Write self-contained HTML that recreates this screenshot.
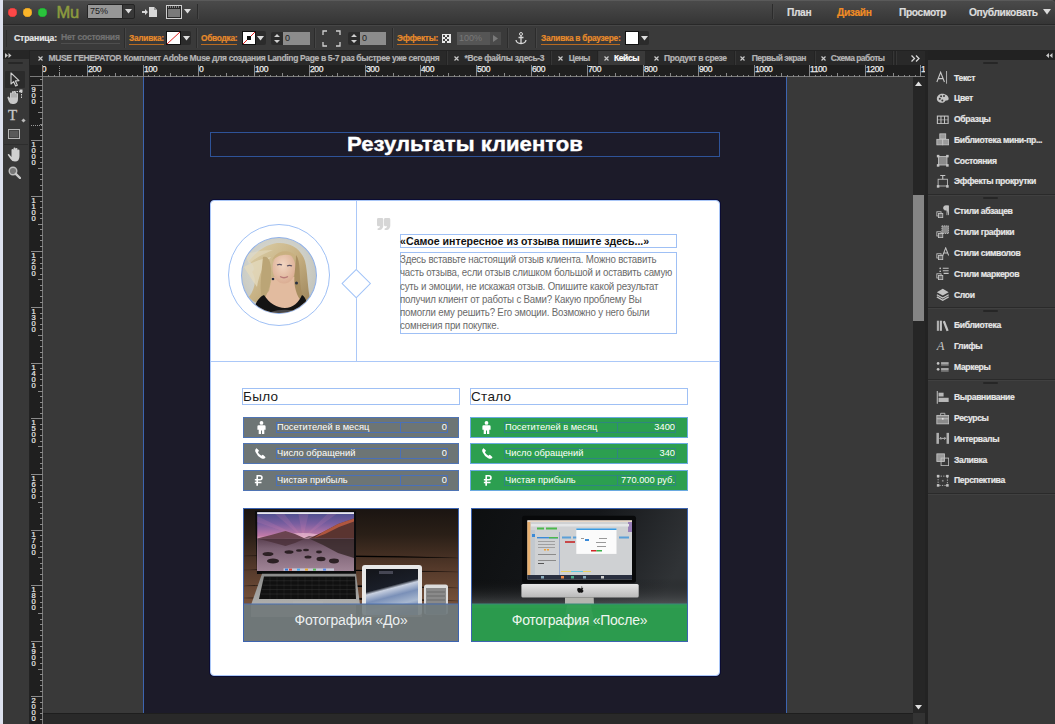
<!DOCTYPE html><html><head><meta charset="utf-8"><title>Muse</title><style>
*{margin:0;padding:0;box-sizing:border-box}
html,body{width:1055px;height:724px;overflow:hidden;background:#383838;font-family:"Liberation Sans",sans-serif}
.abs{position:absolute}
.os{font-family:"Liberation Sans",sans-serif}
.ui{font-family:"Liberation Sans",sans-serif;font-weight:bold;white-space:nowrap;-webkit-text-stroke:0.2px currentColor}
</style></head><body>
<div class="abs" style="left:0;top:0;width:3px;height:724px;background:#dde1ee"></div>
<div class="abs" style="left:3px;top:0;width:1052px;height:24px;background:linear-gradient(#4a4a4a,#353535);border-top-right-radius:4px;border-top:1px solid #5a5a5a"></div>
<div class="abs" style="left:3px;top:24px;width:1052px;height:1px;background:#282828"></div>
<div class="abs" style="left:3px;top:25px;width:1052px;height:25px;background:#3a3a3a;border-top:1px solid #464646"></div>
<div class="abs" style="left:30px;top:50px;width:895px;height:15px;background:#292929;border-top:1px solid #222"></div>
<div class="abs" style="left:3px;top:50px;width:26px;height:674px;background:#383838"></div>
<div class="abs" style="left:3px;top:50px;width:26px;height:9px;background:#262626"></div>
<div class="abs" style="left:29px;top:50px;width:1px;height:674px;background:#222"></div>
<div class="abs" style="left:43px;top:77px;width:870px;height:636px;background:#393939"></div>
<div class="abs" style="left:143px;top:77px;width:644px;height:636px;background:#1c1b29;border-left:1px solid #3d65b0;border-right:1px solid #3d65b0"></div>
<div class="abs" style="left:30px;top:65px;width:13px;height:12px;background:#1f1f1f;border-bottom:1px solid #7a7a7a"></div>
<div class="abs" style="left:42px;top:65px;width:1px;height:14px;background:#8a8a8a"></div>
<svg width="882" height="12" style="position:absolute;left:43px;top:65px"><rect width="882" height="12" fill="#1f1f1f"/><rect y="11" width="882" height="1" fill="#7a7a7a"/><rect x="5" y="10" width="1" height="2" fill="#8a8a8a"/><rect x="11" y="10" width="1" height="2" fill="#8a8a8a"/><rect x="16" y="8" width="1" height="4" fill="#8a8a8a"/><rect x="22" y="10" width="1" height="2" fill="#8a8a8a"/><rect x="27" y="10" width="1" height="2" fill="#8a8a8a"/><rect x="33" y="10" width="1" height="2" fill="#8a8a8a"/><rect x="39" y="10" width="1" height="2" fill="#8a8a8a"/><text x="-10" y="7.2" font-family="Liberation Sans" font-size="8.6" letter-spacing="-0.45" fill="#ececec" stroke="#ececec" stroke-width="0.25">300</text><rect x="44" y="0" width="1" height="12" fill="#8a8a8a"/><rect x="50" y="10" width="1" height="2" fill="#8a8a8a"/><rect x="55" y="10" width="1" height="2" fill="#8a8a8a"/><rect x="61" y="10" width="1" height="2" fill="#8a8a8a"/><rect x="66" y="10" width="1" height="2" fill="#8a8a8a"/><rect x="72" y="8" width="1" height="4" fill="#8a8a8a"/><rect x="77" y="10" width="1" height="2" fill="#8a8a8a"/><rect x="83" y="10" width="1" height="2" fill="#8a8a8a"/><rect x="89" y="10" width="1" height="2" fill="#8a8a8a"/><rect x="94" y="10" width="1" height="2" fill="#8a8a8a"/><text x="45" y="7.2" font-family="Liberation Sans" font-size="8.6" letter-spacing="-0.45" fill="#ececec" stroke="#ececec" stroke-width="0.25">200</text><rect x="100" y="0" width="1" height="12" fill="#8a8a8a"/><rect x="105" y="10" width="1" height="2" fill="#8a8a8a"/><rect x="111" y="10" width="1" height="2" fill="#8a8a8a"/><rect x="116" y="10" width="1" height="2" fill="#8a8a8a"/><rect x="122" y="10" width="1" height="2" fill="#8a8a8a"/><rect x="127" y="8" width="1" height="4" fill="#8a8a8a"/><rect x="133" y="10" width="1" height="2" fill="#8a8a8a"/><rect x="139" y="10" width="1" height="2" fill="#8a8a8a"/><rect x="144" y="10" width="1" height="2" fill="#8a8a8a"/><rect x="150" y="10" width="1" height="2" fill="#8a8a8a"/><text x="101" y="7.2" font-family="Liberation Sans" font-size="8.6" letter-spacing="-0.45" fill="#ececec" stroke="#ececec" stroke-width="0.25">100</text><rect x="155" y="0" width="1" height="12" fill="#8a8a8a"/><rect x="161" y="10" width="1" height="2" fill="#8a8a8a"/><rect x="166" y="10" width="1" height="2" fill="#8a8a8a"/><rect x="172" y="10" width="1" height="2" fill="#8a8a8a"/><rect x="177" y="10" width="1" height="2" fill="#8a8a8a"/><rect x="183" y="8" width="1" height="4" fill="#8a8a8a"/><rect x="189" y="10" width="1" height="2" fill="#8a8a8a"/><rect x="194" y="10" width="1" height="2" fill="#8a8a8a"/><rect x="200" y="10" width="1" height="2" fill="#8a8a8a"/><rect x="205" y="10" width="1" height="2" fill="#8a8a8a"/><text x="156" y="7.2" font-family="Liberation Sans" font-size="8.6" letter-spacing="-0.45" fill="#ececec" stroke="#ececec" stroke-width="0.25">0</text><rect x="211" y="0" width="1" height="12" fill="#8a8a8a"/><rect x="216" y="10" width="1" height="2" fill="#8a8a8a"/><rect x="222" y="10" width="1" height="2" fill="#8a8a8a"/><rect x="227" y="10" width="1" height="2" fill="#8a8a8a"/><rect x="233" y="10" width="1" height="2" fill="#8a8a8a"/><rect x="239" y="8" width="1" height="4" fill="#8a8a8a"/><rect x="244" y="10" width="1" height="2" fill="#8a8a8a"/><rect x="250" y="10" width="1" height="2" fill="#8a8a8a"/><rect x="255" y="10" width="1" height="2" fill="#8a8a8a"/><rect x="261" y="10" width="1" height="2" fill="#8a8a8a"/><text x="212" y="7.2" font-family="Liberation Sans" font-size="8.6" letter-spacing="-0.45" fill="#ececec" stroke="#ececec" stroke-width="0.25">100</text><rect x="266" y="0" width="1" height="12" fill="#8a8a8a"/><rect x="272" y="10" width="1" height="2" fill="#8a8a8a"/><rect x="277" y="10" width="1" height="2" fill="#8a8a8a"/><rect x="283" y="10" width="1" height="2" fill="#8a8a8a"/><rect x="289" y="10" width="1" height="2" fill="#8a8a8a"/><rect x="294" y="8" width="1" height="4" fill="#8a8a8a"/><rect x="300" y="10" width="1" height="2" fill="#8a8a8a"/><rect x="305" y="10" width="1" height="2" fill="#8a8a8a"/><rect x="311" y="10" width="1" height="2" fill="#8a8a8a"/><rect x="316" y="10" width="1" height="2" fill="#8a8a8a"/><text x="267" y="7.2" font-family="Liberation Sans" font-size="8.6" letter-spacing="-0.45" fill="#ececec" stroke="#ececec" stroke-width="0.25">200</text><rect x="322" y="0" width="1" height="12" fill="#8a8a8a"/><rect x="327" y="10" width="1" height="2" fill="#8a8a8a"/><rect x="333" y="10" width="1" height="2" fill="#8a8a8a"/><rect x="339" y="10" width="1" height="2" fill="#8a8a8a"/><rect x="344" y="10" width="1" height="2" fill="#8a8a8a"/><rect x="350" y="8" width="1" height="4" fill="#8a8a8a"/><rect x="355" y="10" width="1" height="2" fill="#8a8a8a"/><rect x="361" y="10" width="1" height="2" fill="#8a8a8a"/><rect x="366" y="10" width="1" height="2" fill="#8a8a8a"/><rect x="372" y="10" width="1" height="2" fill="#8a8a8a"/><text x="323" y="7.2" font-family="Liberation Sans" font-size="8.6" letter-spacing="-0.45" fill="#ececec" stroke="#ececec" stroke-width="0.25">300</text><rect x="377" y="0" width="1" height="12" fill="#8a8a8a"/><rect x="383" y="10" width="1" height="2" fill="#8a8a8a"/><rect x="389" y="10" width="1" height="2" fill="#8a8a8a"/><rect x="394" y="10" width="1" height="2" fill="#8a8a8a"/><rect x="400" y="10" width="1" height="2" fill="#8a8a8a"/><rect x="405" y="8" width="1" height="4" fill="#8a8a8a"/><rect x="411" y="10" width="1" height="2" fill="#8a8a8a"/><rect x="416" y="10" width="1" height="2" fill="#8a8a8a"/><rect x="422" y="10" width="1" height="2" fill="#8a8a8a"/><rect x="427" y="10" width="1" height="2" fill="#8a8a8a"/><text x="378" y="7.2" font-family="Liberation Sans" font-size="8.6" letter-spacing="-0.45" fill="#ececec" stroke="#ececec" stroke-width="0.25">400</text><rect x="433" y="0" width="1" height="12" fill="#8a8a8a"/><rect x="439" y="10" width="1" height="2" fill="#8a8a8a"/><rect x="444" y="10" width="1" height="2" fill="#8a8a8a"/><rect x="450" y="10" width="1" height="2" fill="#8a8a8a"/><rect x="455" y="10" width="1" height="2" fill="#8a8a8a"/><rect x="461" y="8" width="1" height="4" fill="#8a8a8a"/><rect x="466" y="10" width="1" height="2" fill="#8a8a8a"/><rect x="472" y="10" width="1" height="2" fill="#8a8a8a"/><rect x="477" y="10" width="1" height="2" fill="#8a8a8a"/><rect x="483" y="10" width="1" height="2" fill="#8a8a8a"/><text x="434" y="7.2" font-family="Liberation Sans" font-size="8.6" letter-spacing="-0.45" fill="#ececec" stroke="#ececec" stroke-width="0.25">500</text><rect x="488" y="0" width="1" height="12" fill="#8a8a8a"/><rect x="494" y="10" width="1" height="2" fill="#8a8a8a"/><rect x="500" y="10" width="1" height="2" fill="#8a8a8a"/><rect x="505" y="10" width="1" height="2" fill="#8a8a8a"/><rect x="511" y="10" width="1" height="2" fill="#8a8a8a"/><rect x="516" y="8" width="1" height="4" fill="#8a8a8a"/><rect x="522" y="10" width="1" height="2" fill="#8a8a8a"/><rect x="527" y="10" width="1" height="2" fill="#8a8a8a"/><rect x="533" y="10" width="1" height="2" fill="#8a8a8a"/><rect x="538" y="10" width="1" height="2" fill="#8a8a8a"/><text x="489" y="7.2" font-family="Liberation Sans" font-size="8.6" letter-spacing="-0.45" fill="#ececec" stroke="#ececec" stroke-width="0.25">600</text><rect x="544" y="0" width="1" height="12" fill="#8a8a8a"/><rect x="550" y="10" width="1" height="2" fill="#8a8a8a"/><rect x="555" y="10" width="1" height="2" fill="#8a8a8a"/><rect x="561" y="10" width="1" height="2" fill="#8a8a8a"/><rect x="566" y="10" width="1" height="2" fill="#8a8a8a"/><rect x="572" y="8" width="1" height="4" fill="#8a8a8a"/><rect x="577" y="10" width="1" height="2" fill="#8a8a8a"/><rect x="583" y="10" width="1" height="2" fill="#8a8a8a"/><rect x="588" y="10" width="1" height="2" fill="#8a8a8a"/><rect x="594" y="10" width="1" height="2" fill="#8a8a8a"/><text x="545" y="7.2" font-family="Liberation Sans" font-size="8.6" letter-spacing="-0.45" fill="#ececec" stroke="#ececec" stroke-width="0.25">700</text><rect x="600" y="0" width="1" height="12" fill="#8a8a8a"/><rect x="605" y="10" width="1" height="2" fill="#8a8a8a"/><rect x="611" y="10" width="1" height="2" fill="#8a8a8a"/><rect x="616" y="10" width="1" height="2" fill="#8a8a8a"/><rect x="622" y="10" width="1" height="2" fill="#8a8a8a"/><rect x="627" y="8" width="1" height="4" fill="#8a8a8a"/><rect x="633" y="10" width="1" height="2" fill="#8a8a8a"/><rect x="638" y="10" width="1" height="2" fill="#8a8a8a"/><rect x="644" y="10" width="1" height="2" fill="#8a8a8a"/><rect x="650" y="10" width="1" height="2" fill="#8a8a8a"/><text x="601" y="7.2" font-family="Liberation Sans" font-size="8.6" letter-spacing="-0.45" fill="#ececec" stroke="#ececec" stroke-width="0.25">800</text><rect x="655" y="0" width="1" height="12" fill="#8a8a8a"/><rect x="661" y="10" width="1" height="2" fill="#8a8a8a"/><rect x="666" y="10" width="1" height="2" fill="#8a8a8a"/><rect x="672" y="10" width="1" height="2" fill="#8a8a8a"/><rect x="677" y="10" width="1" height="2" fill="#8a8a8a"/><rect x="683" y="8" width="1" height="4" fill="#8a8a8a"/><rect x="688" y="10" width="1" height="2" fill="#8a8a8a"/><rect x="694" y="10" width="1" height="2" fill="#8a8a8a"/><rect x="700" y="10" width="1" height="2" fill="#8a8a8a"/><rect x="705" y="10" width="1" height="2" fill="#8a8a8a"/><text x="656" y="7.2" font-family="Liberation Sans" font-size="8.6" letter-spacing="-0.45" fill="#ececec" stroke="#ececec" stroke-width="0.25">900</text><rect x="711" y="0" width="1" height="12" fill="#8a8a8a"/><rect x="716" y="10" width="1" height="2" fill="#8a8a8a"/><rect x="722" y="10" width="1" height="2" fill="#8a8a8a"/><rect x="727" y="10" width="1" height="2" fill="#8a8a8a"/><rect x="733" y="10" width="1" height="2" fill="#8a8a8a"/><rect x="738" y="8" width="1" height="4" fill="#8a8a8a"/><rect x="744" y="10" width="1" height="2" fill="#8a8a8a"/><rect x="750" y="10" width="1" height="2" fill="#8a8a8a"/><rect x="755" y="10" width="1" height="2" fill="#8a8a8a"/><rect x="761" y="10" width="1" height="2" fill="#8a8a8a"/><text x="712" y="7.2" font-family="Liberation Sans" font-size="8.6" letter-spacing="-0.45" fill="#ececec" stroke="#ececec" stroke-width="0.25">1000</text><rect x="766" y="0" width="1" height="12" fill="#8a8a8a"/><rect x="772" y="10" width="1" height="2" fill="#8a8a8a"/><rect x="777" y="10" width="1" height="2" fill="#8a8a8a"/><rect x="783" y="10" width="1" height="2" fill="#8a8a8a"/><rect x="788" y="10" width="1" height="2" fill="#8a8a8a"/><rect x="794" y="8" width="1" height="4" fill="#8a8a8a"/><rect x="800" y="10" width="1" height="2" fill="#8a8a8a"/><rect x="805" y="10" width="1" height="2" fill="#8a8a8a"/><rect x="811" y="10" width="1" height="2" fill="#8a8a8a"/><rect x="816" y="10" width="1" height="2" fill="#8a8a8a"/><text x="767" y="7.2" font-family="Liberation Sans" font-size="8.6" letter-spacing="-0.45" fill="#ececec" stroke="#ececec" stroke-width="0.25">1100</text><rect x="822" y="0" width="1" height="12" fill="#8a8a8a"/><rect x="827" y="10" width="1" height="2" fill="#8a8a8a"/><rect x="833" y="10" width="1" height="2" fill="#8a8a8a"/><rect x="838" y="10" width="1" height="2" fill="#8a8a8a"/><rect x="844" y="10" width="1" height="2" fill="#8a8a8a"/><rect x="850" y="8" width="1" height="4" fill="#8a8a8a"/><rect x="855" y="10" width="1" height="2" fill="#8a8a8a"/><rect x="861" y="10" width="1" height="2" fill="#8a8a8a"/><rect x="866" y="10" width="1" height="2" fill="#8a8a8a"/><rect x="872" y="10" width="1" height="2" fill="#8a8a8a"/><text x="823" y="7.2" font-family="Liberation Sans" font-size="8.6" letter-spacing="-0.45" fill="#ececec" stroke="#ececec" stroke-width="0.25">1200</text><rect x="877" y="0" width="1" height="12" fill="#8a8a8a"/><text x="878" y="7.2" font-family="Liberation Sans" font-size="8.6" letter-spacing="-0.45" fill="#ececec" stroke="#ececec" stroke-width="0.25">1300</text></svg>
<svg width="13" height="647" style="position:absolute;left:30px;top:77px"><rect width="13" height="647" fill="#1f1f1f"/><rect x="12" width="1" height="647" fill="#7a7a7a"/><rect x="10" y="2" width="3" height="1" fill="#8a8a8a"/><text x="3.6" y="-41.1" text-anchor="middle" font-family="Liberation Sans" font-size="7.6" fill="#ececec" stroke="#ececec" stroke-width="0.2">8</text><text x="3.6" y="-35.2" text-anchor="middle" font-family="Liberation Sans" font-size="7.6" fill="#ececec" stroke="#ececec" stroke-width="0.2">0</text><text x="3.6" y="-29.3" text-anchor="middle" font-family="Liberation Sans" font-size="7.6" fill="#ececec" stroke="#ececec" stroke-width="0.2">0</text><rect x="1" y="8" width="12" height="1" fill="#8a8a8a"/><rect x="10" y="13" width="3" height="1" fill="#8a8a8a"/><rect x="10" y="19" width="3" height="1" fill="#8a8a8a"/><rect x="10" y="24" width="3" height="1" fill="#8a8a8a"/><rect x="10" y="30" width="3" height="1" fill="#8a8a8a"/><rect x="8" y="35" width="5" height="1" fill="#8a8a8a"/><rect x="10" y="41" width="3" height="1" fill="#8a8a8a"/><rect x="10" y="47" width="3" height="1" fill="#8a8a8a"/><rect x="10" y="52" width="3" height="1" fill="#8a8a8a"/><rect x="10" y="58" width="3" height="1" fill="#8a8a8a"/><text x="3.6" y="14.9" text-anchor="middle" font-family="Liberation Sans" font-size="7.6" fill="#ececec" stroke="#ececec" stroke-width="0.2">9</text><text x="3.6" y="20.8" text-anchor="middle" font-family="Liberation Sans" font-size="7.6" fill="#ececec" stroke="#ececec" stroke-width="0.2">0</text><text x="3.6" y="26.7" text-anchor="middle" font-family="Liberation Sans" font-size="7.6" fill="#ececec" stroke="#ececec" stroke-width="0.2">0</text><rect x="1" y="63" width="12" height="1" fill="#8a8a8a"/><rect x="10" y="69" width="3" height="1" fill="#8a8a8a"/><rect x="10" y="74" width="3" height="1" fill="#8a8a8a"/><rect x="10" y="80" width="3" height="1" fill="#8a8a8a"/><rect x="10" y="85" width="3" height="1" fill="#8a8a8a"/><rect x="8" y="91" width="5" height="1" fill="#8a8a8a"/><rect x="10" y="97" width="3" height="1" fill="#8a8a8a"/><rect x="10" y="102" width="3" height="1" fill="#8a8a8a"/><rect x="10" y="108" width="3" height="1" fill="#8a8a8a"/><rect x="10" y="113" width="3" height="1" fill="#8a8a8a"/><text x="3.6" y="69.9" text-anchor="middle" font-family="Liberation Sans" font-size="7.6" fill="#ececec" stroke="#ececec" stroke-width="0.2">1</text><text x="3.6" y="75.8" text-anchor="middle" font-family="Liberation Sans" font-size="7.6" fill="#ececec" stroke="#ececec" stroke-width="0.2">0</text><text x="3.6" y="81.7" text-anchor="middle" font-family="Liberation Sans" font-size="7.6" fill="#ececec" stroke="#ececec" stroke-width="0.2">0</text><text x="3.6" y="87.6" text-anchor="middle" font-family="Liberation Sans" font-size="7.6" fill="#ececec" stroke="#ececec" stroke-width="0.2">0</text><rect x="1" y="119" width="12" height="1" fill="#8a8a8a"/><rect x="10" y="124" width="3" height="1" fill="#8a8a8a"/><rect x="10" y="130" width="3" height="1" fill="#8a8a8a"/><rect x="10" y="136" width="3" height="1" fill="#8a8a8a"/><rect x="10" y="141" width="3" height="1" fill="#8a8a8a"/><rect x="8" y="147" width="5" height="1" fill="#8a8a8a"/><rect x="10" y="152" width="3" height="1" fill="#8a8a8a"/><rect x="10" y="158" width="3" height="1" fill="#8a8a8a"/><rect x="10" y="163" width="3" height="1" fill="#8a8a8a"/><rect x="10" y="169" width="3" height="1" fill="#8a8a8a"/><text x="3.6" y="125.9" text-anchor="middle" font-family="Liberation Sans" font-size="7.6" fill="#ececec" stroke="#ececec" stroke-width="0.2">1</text><text x="3.6" y="131.8" text-anchor="middle" font-family="Liberation Sans" font-size="7.6" fill="#ececec" stroke="#ececec" stroke-width="0.2">1</text><text x="3.6" y="137.7" text-anchor="middle" font-family="Liberation Sans" font-size="7.6" fill="#ececec" stroke="#ececec" stroke-width="0.2">0</text><text x="3.6" y="143.6" text-anchor="middle" font-family="Liberation Sans" font-size="7.6" fill="#ececec" stroke="#ececec" stroke-width="0.2">0</text><rect x="1" y="174" width="12" height="1" fill="#8a8a8a"/><rect x="10" y="180" width="3" height="1" fill="#8a8a8a"/><rect x="10" y="186" width="3" height="1" fill="#8a8a8a"/><rect x="10" y="191" width="3" height="1" fill="#8a8a8a"/><rect x="10" y="197" width="3" height="1" fill="#8a8a8a"/><rect x="8" y="202" width="5" height="1" fill="#8a8a8a"/><rect x="10" y="208" width="3" height="1" fill="#8a8a8a"/><rect x="10" y="213" width="3" height="1" fill="#8a8a8a"/><rect x="10" y="219" width="3" height="1" fill="#8a8a8a"/><rect x="10" y="225" width="3" height="1" fill="#8a8a8a"/><text x="3.6" y="180.9" text-anchor="middle" font-family="Liberation Sans" font-size="7.6" fill="#ececec" stroke="#ececec" stroke-width="0.2">1</text><text x="3.6" y="186.8" text-anchor="middle" font-family="Liberation Sans" font-size="7.6" fill="#ececec" stroke="#ececec" stroke-width="0.2">2</text><text x="3.6" y="192.7" text-anchor="middle" font-family="Liberation Sans" font-size="7.6" fill="#ececec" stroke="#ececec" stroke-width="0.2">0</text><text x="3.6" y="198.6" text-anchor="middle" font-family="Liberation Sans" font-size="7.6" fill="#ececec" stroke="#ececec" stroke-width="0.2">0</text><rect x="1" y="230" width="12" height="1" fill="#8a8a8a"/><rect x="10" y="236" width="3" height="1" fill="#8a8a8a"/><rect x="10" y="241" width="3" height="1" fill="#8a8a8a"/><rect x="10" y="247" width="3" height="1" fill="#8a8a8a"/><rect x="10" y="252" width="3" height="1" fill="#8a8a8a"/><rect x="8" y="258" width="5" height="1" fill="#8a8a8a"/><rect x="10" y="263" width="3" height="1" fill="#8a8a8a"/><rect x="10" y="269" width="3" height="1" fill="#8a8a8a"/><rect x="10" y="275" width="3" height="1" fill="#8a8a8a"/><rect x="10" y="280" width="3" height="1" fill="#8a8a8a"/><text x="3.6" y="236.9" text-anchor="middle" font-family="Liberation Sans" font-size="7.6" fill="#ececec" stroke="#ececec" stroke-width="0.2">1</text><text x="3.6" y="242.8" text-anchor="middle" font-family="Liberation Sans" font-size="7.6" fill="#ececec" stroke="#ececec" stroke-width="0.2">3</text><text x="3.6" y="248.7" text-anchor="middle" font-family="Liberation Sans" font-size="7.6" fill="#ececec" stroke="#ececec" stroke-width="0.2">0</text><text x="3.6" y="254.6" text-anchor="middle" font-family="Liberation Sans" font-size="7.6" fill="#ececec" stroke="#ececec" stroke-width="0.2">0</text><rect x="1" y="286" width="12" height="1" fill="#8a8a8a"/><rect x="10" y="291" width="3" height="1" fill="#8a8a8a"/><rect x="10" y="297" width="3" height="1" fill="#8a8a8a"/><rect x="10" y="302" width="3" height="1" fill="#8a8a8a"/><rect x="10" y="308" width="3" height="1" fill="#8a8a8a"/><rect x="8" y="314" width="5" height="1" fill="#8a8a8a"/><rect x="10" y="319" width="3" height="1" fill="#8a8a8a"/><rect x="10" y="325" width="3" height="1" fill="#8a8a8a"/><rect x="10" y="330" width="3" height="1" fill="#8a8a8a"/><rect x="10" y="336" width="3" height="1" fill="#8a8a8a"/><text x="3.6" y="292.9" text-anchor="middle" font-family="Liberation Sans" font-size="7.6" fill="#ececec" stroke="#ececec" stroke-width="0.2">1</text><text x="3.6" y="298.8" text-anchor="middle" font-family="Liberation Sans" font-size="7.6" fill="#ececec" stroke="#ececec" stroke-width="0.2">4</text><text x="3.6" y="304.7" text-anchor="middle" font-family="Liberation Sans" font-size="7.6" fill="#ececec" stroke="#ececec" stroke-width="0.2">0</text><text x="3.6" y="310.6" text-anchor="middle" font-family="Liberation Sans" font-size="7.6" fill="#ececec" stroke="#ececec" stroke-width="0.2">0</text><rect x="1" y="341" width="12" height="1" fill="#8a8a8a"/><rect x="10" y="347" width="3" height="1" fill="#8a8a8a"/><rect x="10" y="352" width="3" height="1" fill="#8a8a8a"/><rect x="10" y="358" width="3" height="1" fill="#8a8a8a"/><rect x="10" y="364" width="3" height="1" fill="#8a8a8a"/><rect x="8" y="369" width="5" height="1" fill="#8a8a8a"/><rect x="10" y="375" width="3" height="1" fill="#8a8a8a"/><rect x="10" y="380" width="3" height="1" fill="#8a8a8a"/><rect x="10" y="386" width="3" height="1" fill="#8a8a8a"/><rect x="10" y="391" width="3" height="1" fill="#8a8a8a"/><text x="3.6" y="347.9" text-anchor="middle" font-family="Liberation Sans" font-size="7.6" fill="#ececec" stroke="#ececec" stroke-width="0.2">1</text><text x="3.6" y="353.8" text-anchor="middle" font-family="Liberation Sans" font-size="7.6" fill="#ececec" stroke="#ececec" stroke-width="0.2">5</text><text x="3.6" y="359.7" text-anchor="middle" font-family="Liberation Sans" font-size="7.6" fill="#ececec" stroke="#ececec" stroke-width="0.2">0</text><text x="3.6" y="365.6" text-anchor="middle" font-family="Liberation Sans" font-size="7.6" fill="#ececec" stroke="#ececec" stroke-width="0.2">0</text><rect x="1" y="397" width="12" height="1" fill="#8a8a8a"/><rect x="10" y="403" width="3" height="1" fill="#8a8a8a"/><rect x="10" y="408" width="3" height="1" fill="#8a8a8a"/><rect x="10" y="414" width="3" height="1" fill="#8a8a8a"/><rect x="10" y="419" width="3" height="1" fill="#8a8a8a"/><rect x="8" y="425" width="5" height="1" fill="#8a8a8a"/><rect x="10" y="430" width="3" height="1" fill="#8a8a8a"/><rect x="10" y="436" width="3" height="1" fill="#8a8a8a"/><rect x="10" y="441" width="3" height="1" fill="#8a8a8a"/><rect x="10" y="447" width="3" height="1" fill="#8a8a8a"/><text x="3.6" y="403.9" text-anchor="middle" font-family="Liberation Sans" font-size="7.6" fill="#ececec" stroke="#ececec" stroke-width="0.2">1</text><text x="3.6" y="409.8" text-anchor="middle" font-family="Liberation Sans" font-size="7.6" fill="#ececec" stroke="#ececec" stroke-width="0.2">6</text><text x="3.6" y="415.7" text-anchor="middle" font-family="Liberation Sans" font-size="7.6" fill="#ececec" stroke="#ececec" stroke-width="0.2">0</text><text x="3.6" y="421.6" text-anchor="middle" font-family="Liberation Sans" font-size="7.6" fill="#ececec" stroke="#ececec" stroke-width="0.2">0</text><rect x="1" y="453" width="12" height="1" fill="#8a8a8a"/><rect x="10" y="458" width="3" height="1" fill="#8a8a8a"/><rect x="10" y="464" width="3" height="1" fill="#8a8a8a"/><rect x="10" y="469" width="3" height="1" fill="#8a8a8a"/><rect x="10" y="475" width="3" height="1" fill="#8a8a8a"/><rect x="8" y="480" width="5" height="1" fill="#8a8a8a"/><rect x="10" y="486" width="3" height="1" fill="#8a8a8a"/><rect x="10" y="491" width="3" height="1" fill="#8a8a8a"/><rect x="10" y="497" width="3" height="1" fill="#8a8a8a"/><rect x="10" y="503" width="3" height="1" fill="#8a8a8a"/><text x="3.6" y="459.9" text-anchor="middle" font-family="Liberation Sans" font-size="7.6" fill="#ececec" stroke="#ececec" stroke-width="0.2">1</text><text x="3.6" y="465.8" text-anchor="middle" font-family="Liberation Sans" font-size="7.6" fill="#ececec" stroke="#ececec" stroke-width="0.2">7</text><text x="3.6" y="471.7" text-anchor="middle" font-family="Liberation Sans" font-size="7.6" fill="#ececec" stroke="#ececec" stroke-width="0.2">0</text><text x="3.6" y="477.6" text-anchor="middle" font-family="Liberation Sans" font-size="7.6" fill="#ececec" stroke="#ececec" stroke-width="0.2">0</text><rect x="1" y="508" width="12" height="1" fill="#8a8a8a"/><rect x="10" y="514" width="3" height="1" fill="#8a8a8a"/><rect x="10" y="519" width="3" height="1" fill="#8a8a8a"/><rect x="10" y="525" width="3" height="1" fill="#8a8a8a"/><rect x="10" y="530" width="3" height="1" fill="#8a8a8a"/><rect x="8" y="536" width="5" height="1" fill="#8a8a8a"/><rect x="10" y="542" width="3" height="1" fill="#8a8a8a"/><rect x="10" y="547" width="3" height="1" fill="#8a8a8a"/><rect x="10" y="553" width="3" height="1" fill="#8a8a8a"/><rect x="10" y="558" width="3" height="1" fill="#8a8a8a"/><text x="3.6" y="514.9" text-anchor="middle" font-family="Liberation Sans" font-size="7.6" fill="#ececec" stroke="#ececec" stroke-width="0.2">1</text><text x="3.6" y="520.8" text-anchor="middle" font-family="Liberation Sans" font-size="7.6" fill="#ececec" stroke="#ececec" stroke-width="0.2">8</text><text x="3.6" y="526.7" text-anchor="middle" font-family="Liberation Sans" font-size="7.6" fill="#ececec" stroke="#ececec" stroke-width="0.2">0</text><text x="3.6" y="532.6" text-anchor="middle" font-family="Liberation Sans" font-size="7.6" fill="#ececec" stroke="#ececec" stroke-width="0.2">0</text><rect x="1" y="564" width="12" height="1" fill="#8a8a8a"/><rect x="10" y="569" width="3" height="1" fill="#8a8a8a"/><rect x="10" y="575" width="3" height="1" fill="#8a8a8a"/><rect x="10" y="580" width="3" height="1" fill="#8a8a8a"/><rect x="10" y="586" width="3" height="1" fill="#8a8a8a"/><rect x="8" y="592" width="5" height="1" fill="#8a8a8a"/><rect x="10" y="597" width="3" height="1" fill="#8a8a8a"/><rect x="10" y="603" width="3" height="1" fill="#8a8a8a"/><rect x="10" y="608" width="3" height="1" fill="#8a8a8a"/><rect x="10" y="614" width="3" height="1" fill="#8a8a8a"/><text x="3.6" y="570.9" text-anchor="middle" font-family="Liberation Sans" font-size="7.6" fill="#ececec" stroke="#ececec" stroke-width="0.2">1</text><text x="3.6" y="576.8" text-anchor="middle" font-family="Liberation Sans" font-size="7.6" fill="#ececec" stroke="#ececec" stroke-width="0.2">9</text><text x="3.6" y="582.7" text-anchor="middle" font-family="Liberation Sans" font-size="7.6" fill="#ececec" stroke="#ececec" stroke-width="0.2">0</text><text x="3.6" y="588.6" text-anchor="middle" font-family="Liberation Sans" font-size="7.6" fill="#ececec" stroke="#ececec" stroke-width="0.2">0</text><rect x="1" y="619" width="12" height="1" fill="#8a8a8a"/><rect x="10" y="625" width="3" height="1" fill="#8a8a8a"/><rect x="10" y="631" width="3" height="1" fill="#8a8a8a"/><rect x="10" y="636" width="3" height="1" fill="#8a8a8a"/><rect x="10" y="642" width="3" height="1" fill="#8a8a8a"/><text x="3.6" y="625.9" text-anchor="middle" font-family="Liberation Sans" font-size="7.6" fill="#ececec" stroke="#ececec" stroke-width="0.2">2</text><text x="3.6" y="631.8" text-anchor="middle" font-family="Liberation Sans" font-size="7.6" fill="#ececec" stroke="#ececec" stroke-width="0.2">0</text><text x="3.6" y="637.7" text-anchor="middle" font-family="Liberation Sans" font-size="7.6" fill="#ececec" stroke="#ececec" stroke-width="0.2">0</text><text x="3.6" y="643.6" text-anchor="middle" font-family="Liberation Sans" font-size="7.6" fill="#ececec" stroke="#ececec" stroke-width="0.2">0</text><text x="3.6" y="681.9" text-anchor="middle" font-family="Liberation Sans" font-size="7.6" fill="#ececec" stroke="#ececec" stroke-width="0.2">2</text><text x="3.6" y="687.8" text-anchor="middle" font-family="Liberation Sans" font-size="7.6" fill="#ececec" stroke="#ececec" stroke-width="0.2">1</text><text x="3.6" y="693.7" text-anchor="middle" font-family="Liberation Sans" font-size="7.6" fill="#ececec" stroke="#ececec" stroke-width="0.2">0</text><text x="3.6" y="699.6" text-anchor="middle" font-family="Liberation Sans" font-size="7.6" fill="#ececec" stroke="#ececec" stroke-width="0.2">0</text></svg>
<div class="abs" style="left:59px;top:66px;width:1px;height:10px;background:repeating-linear-gradient(#9a9a9a 0 1px,transparent 1px 2px)"></div>
<div class="abs" style="left:31px;top:125px;width:11px;height:1px;background:repeating-linear-gradient(90deg,#9a9a9a 0 1px,transparent 1px 2px)"></div>
<div class="abs" style="left:913px;top:77px;width:12px;height:636px;background:#262626"></div>
<div class="abs" style="left:913px;top:195px;width:11px;height:126px;background:#858585"></div>
<div class="abs" style="left:43px;top:713px;width:870px;height:11px;background:#292929;border-top:1px solid #1e1e1e"></div>
<div class="abs" style="left:913px;top:713px;width:12px;height:11px;background:#333"></div>
<div class="abs" style="left:925px;top:50px;width:3px;height:674px;background:#232323"></div>
<div class="abs" style="left:928px;top:50px;width:127px;height:674px;background:#383838"></div>
<div class="abs" style="left:928px;top:50px;width:127px;height:10px;background:#222"></div>
<!-- PAGE CONTENT -->
<div class="abs" style="left:210px;top:132px;width:510px;height:25px;border:1px solid #2e5398"></div>
<div class="abs os" style="left:210px;top:132px;width:510px;height:25px;color:#fff;font-size:20px;font-weight:bold;text-align:center;line-height:25px;transform:scaleX(1.105);-webkit-text-stroke:0.35px #fff">Результаты клиентов</div>

<div class="abs" style="left:210px;top:200px;width:510px;height:476px;background:#fff;border-radius:4px;box-shadow:0 0 0 1px #0b0c33;border:1px solid #a9c6f7"></div>
<!-- dividers -->
<div class="abs" style="left:356px;top:201px;width:1px;height:160px;background:#abc8f8"></div>
<div class="abs" style="left:211px;top:361px;width:509px;height:1px;background:#abc8f8"></div>
<!-- diamond -->
<div class="abs" style="left:346.2px;top:273.1px;width:20.5px;height:20.5px;background:#fff;border:1px solid #a2c4f8;transform:rotate(45deg)"></div>
<!-- avatar -->
<div class="abs" style="left:228px;top:224px;width:102px;height:102px;border-radius:50%;border:1px solid #9fc0f5"></div>
<div class="abs" style="left:241px;top:237px;width:76px;height:77px;border-radius:50%;overflow:hidden;border:1px solid #8fb0e8;background:radial-gradient(ellipse at 45% 40%,#dcdcd4 0,#cdcec6 55%,#b9bab2 100%)">
 <svg width="76" height="76" viewBox="0 0 76 76" style="position:absolute;left:-1px;top:-1px">
  <defs>
   <linearGradient id="hair" x1="0" y1="0" x2="1" y2="1"><stop offset="0" stop-color="#ddd0aa"/><stop offset="0.5" stop-color="#c6b082"/><stop offset="1" stop-color="#9c845a"/></linearGradient>
   <radialGradient id="skin" cx="0.45" cy="0.4" r="0.65"><stop offset="0" stop-color="#f2d6c2"/><stop offset="1" stop-color="#d9ab90"/></radialGradient>
  </defs>
  <path d="M8 24 C16 14 24 8 36 6 C50 5 60 12 64 24 C67 36 66 50 70 66 C62 70 54 68 50 62 L28 62 C20 68 12 66 8 60 C14 52 16 42 11 35 C15 32 12 27 8 24Z" fill="url(#hair)"/>
  <path d="M3 30 C12 24 22 22 30 20 C22 28 18 38 16 50 C12 44 7 37 3 30Z" fill="#e4dabd" opacity="0.8"/>
  <path d="M4 17 C13 15 22 13 32 13 C22 17 14 21 8 27Z" fill="#e6dcc2" opacity="0.55"/>
  <path d="M31 40 L55 40 L58 54 C62 58 64 64 66 76 L18 76 C20 64 24 58 28 54Z" fill="#e2bb9f"/>
  <ellipse cx="43" cy="31" rx="11.5" ry="15.5" fill="url(#skin)"/>
  <path d="M31 24 C34 12 52 11 56 22 C50 16 38 16 31 24Z" fill="#c9b080"/>
  <path d="M22 20 C28 18 31 26 30 40 C29 50 26 58 22 64 C18 54 20 40 22 20Z" fill="#bba576"/>
  <path d="M55 18 C60 24 58 40 60 52 C61 58 64 62 66 66 C60 66 56 60 54 50 C52 40 55 30 55 18Z" fill="#a88e60"/>
  <path d="M36 28 q2.5 -1.2 5 0" stroke="#5a5060" stroke-width="1.2" fill="none"/>
  <path d="M46 29 q2.5 -1.2 5 0" stroke="#5a5060" stroke-width="1.2" fill="none"/>
  <path d="M39 39.5 Q43 42 47 39.5" stroke="#b87a78" stroke-width="1.3" fill="none"/>
  <circle cx="32" cy="42" r="1.3" fill="#283040"/><circle cx="55.5" cy="46" r="1.5" fill="#283040"/>
  <path d="M12 76 C14 66 18 60 23 58 C28 66 36 71 44 71 C52 71 58 65 61 58 C65 60 67 68 68 76Z" fill="#141414"/>
  <path d="M30 75 C38 72 50 72 58 75 L58 76 L30 76Z" fill="#7a7a80" opacity="0.5"/>
 </svg>
</div>
<!-- quote mark -->
<svg class="abs" style="left:376.8px;top:217.5px" width="14" height="12" viewBox="0 0 14 12"><path id="q9" d="M1.4 0 H4.9 Q6.3 0 6.3 1.4 V7.2 Q6.3 11 3 12 H0.6 V10.4 Q2.9 10 3.1 8.3 H1.4 Q0 8.3 0 6.9 V1.4 Q0 0 1.4 0Z" fill="#d6d6d6"/><use href="#q9" x="7"/></svg>
<!-- headline -->
<div class="abs" style="left:400px;top:234px;width:277px;height:14px;border:1px solid #9fc0f5"></div>
<div class="abs os" style="left:400px;top:234px;height:14px;color:#111;font-size:10.6px;font-weight:bold;line-height:14px;white-space:nowrap">«Самое интересное из отзыва пишите здесь...»</div>
<div class="abs" style="left:400px;top:252px;width:277px;height:82px;border:1px solid #9fc0f5"></div>
<div class="abs os" style="left:400px;top:253px;white-space:nowrap;color:#6a6a6a;font-size:10.6px;letter-spacing:-0.2px;line-height:13.3px;transform-origin:0 0;transform:scaleX(0.915)">Здесь вставьте настоящий отзыв клиента. Можно вставить<br>часть отзыва, если отзыв слишком большой и оставить самую<br>суть и эмоции, не искажая отзыв. Опишите какой результат<br>получил клиент от работы с Вами? Какую проблему Вы<br>помогли ему решить? Его эмоции. Возможно у него были<br>сомнения при покупке.</div>

<!-- Было / Стало -->
<div class="abs" style="left:242px;top:388px;width:218px;height:17px;border:1px solid #9fc0f5"></div>
<div class="abs os" style="left:243px;top:388px;height:17px;color:#1a1a1a;font-size:13.5px;letter-spacing:0.3px;line-height:17px">Было</div>
<div class="abs" style="left:470px;top:388px;width:218px;height:17px;border:1px solid #9fc0f5"></div>
<div class="abs os" style="left:471px;top:388px;height:17px;color:#1a1a1a;font-size:13.5px;letter-spacing:0.3px;line-height:17px">Стало</div>

<div class="abs" style="left:243px;top:417px;width:216px;height:21px;background:#6d7575;border:1px solid #4f74b4;"></div>
<svg class="abs" style="left:257.2px;top:420.5px" width="9" height="13" viewBox="0 0 9 13"><circle cx="4.5" cy="1.9" r="1.9" fill="#fff"/><path d="M1.6 4.2 H7.4 Q8.6 4.2 8.6 5.4 V8.8 H7.3 V13 H5 V9.4 H4 V13 H1.7 V8.8 H0.4 V5.4 Q0.4 4.2 1.6 4.2Z" fill="#fff"/></svg>
<div class="abs" style="left:276px;top:422px;width:124px;height:11px;border:1px solid #4a70b8;border-right:none"></div>
<div class="abs" style="left:400px;top:422px;width:48px;height:11px;border:1px solid #4a70b8"></div>
<div class="abs os" style="left:277px;top:421px;height:13px;line-height:13px;color:#fff;font-size:9.3px;white-space:nowrap">Посетителей в месяц</div>
<div class="abs os" style="left:400px;top:421px;width:47px;height:13px;line-height:13px;color:#fff;font-size:9.3px;text-align:right;white-space:nowrap">0</div>
<div class="abs" style="left:243px;top:443px;width:216px;height:21px;background:#6d7575;border:1px solid #4f74b4;"></div>
<svg class="abs" style="left:254.5px;top:447.8px" width="11" height="11" viewBox="0 0 13 13"><path d="M2.2 0.5 L4.4 2.8 Q4.8 3.3 4.3 3.9 L3.4 4.9 Q4.6 7.6 7.6 9.3 L8.6 8.4 Q9.2 7.9 9.7 8.3 L12.2 10.5 Q12.6 11 12.1 11.5 L10.8 12.6 Q9.6 13.3 7.3 12 Q2.6 9.3 0.6 4.6 Q-0.2 2.6 0.7 1.4 L1.3 0.6 Q1.7 0.1 2.2 0.5Z" fill="#fff"/></svg>
<div class="abs" style="left:276px;top:448px;width:124px;height:11px;border:1px solid #4a70b8;border-right:none"></div>
<div class="abs" style="left:400px;top:448px;width:48px;height:11px;border:1px solid #4a70b8"></div>
<div class="abs os" style="left:277px;top:447px;height:13px;line-height:13px;color:#fff;font-size:9.3px;white-space:nowrap">Число обращений</div>
<div class="abs os" style="left:400px;top:447px;width:47px;height:13px;line-height:13px;color:#fff;font-size:9.3px;text-align:right;white-space:nowrap">0</div>
<div class="abs" style="left:243px;top:470px;width:216px;height:21px;background:#6d7575;border:1px solid #4f74b4;"></div>
<svg class="abs" style="left:254.39999999999998px;top:474px" width="10" height="12" viewBox="0 0 12 14"><path d="M3 1 h4.2 a3.3 3.3 0 0 1 0 6.6 h-2.4 v1.6 h4.2 v1.8 h-4.2 v2.8 h-2 v-2.8 h-1.8 v-1.8 h1.8 v-1.6 h-1.8 v-1.8 h1.8z M4.8 2.8 v3 h2.3 a1.5 1.5 0 0 0 0 -3z" fill="#fff" fill-rule="evenodd"/></svg>
<div class="abs" style="left:276px;top:475px;width:124px;height:11px;border:1px solid #4a70b8;border-right:none"></div>
<div class="abs" style="left:400px;top:475px;width:48px;height:11px;border:1px solid #4a70b8"></div>
<div class="abs os" style="left:277px;top:474px;height:13px;line-height:13px;color:#fff;font-size:9.3px;white-space:nowrap">Чистая прибыль</div>
<div class="abs os" style="left:400px;top:474px;width:47px;height:13px;line-height:13px;color:#fff;font-size:9.3px;text-align:right;white-space:nowrap">0</div>
<div class="abs" style="left:470px;top:417px;width:218px;height:21px;background:#2c9f50;border:1px solid #6aaae0;"></div>
<svg class="abs" style="left:481.9px;top:420.5px" width="9" height="13" viewBox="0 0 9 13"><circle cx="4.5" cy="1.9" r="1.9" fill="#fff"/><path d="M1.6 4.2 H7.4 Q8.6 4.2 8.6 5.4 V8.8 H7.3 V13 H5 V9.4 H4 V13 H1.7 V8.8 H0.4 V5.4 Q0.4 4.2 1.6 4.2Z" fill="#fff"/></svg>
<div class="abs" style="left:504px;top:422px;width:113px;height:11px;border:1px solid #2f8580;border-right:none"></div>
<div class="abs" style="left:617px;top:422px;width:59px;height:11px;border:1px solid #2f8580"></div>
<div class="abs os" style="left:505px;top:421px;height:13px;line-height:13px;color:#fff;font-size:9.3px;white-space:nowrap">Посетителей в месяц</div>
<div class="abs os" style="left:617px;top:421px;width:58px;height:13px;line-height:13px;color:#fff;font-size:9.3px;text-align:right;white-space:nowrap">3400</div>
<div class="abs" style="left:470px;top:443px;width:218px;height:21px;background:#2c9f50;border:1px solid #6aaae0;"></div>
<svg class="abs" style="left:482.4px;top:447.8px" width="11" height="11" viewBox="0 0 13 13"><path d="M2.2 0.5 L4.4 2.8 Q4.8 3.3 4.3 3.9 L3.4 4.9 Q4.6 7.6 7.6 9.3 L8.6 8.4 Q9.2 7.9 9.7 8.3 L12.2 10.5 Q12.6 11 12.1 11.5 L10.8 12.6 Q9.6 13.3 7.3 12 Q2.6 9.3 0.6 4.6 Q-0.2 2.6 0.7 1.4 L1.3 0.6 Q1.7 0.1 2.2 0.5Z" fill="#fff"/></svg>
<div class="abs" style="left:504px;top:448px;width:113px;height:11px;border:1px solid #2f8580;border-right:none"></div>
<div class="abs" style="left:617px;top:448px;width:59px;height:11px;border:1px solid #2f8580"></div>
<div class="abs os" style="left:505px;top:447px;height:13px;line-height:13px;color:#fff;font-size:9.3px;white-space:nowrap">Число обращений</div>
<div class="abs os" style="left:617px;top:447px;width:58px;height:13px;line-height:13px;color:#fff;font-size:9.3px;text-align:right;white-space:nowrap">340</div>
<div class="abs" style="left:470px;top:470px;width:218px;height:21px;background:#2c9f50;border:1px solid #6aaae0;"></div>
<svg class="abs" style="left:482.9px;top:474px" width="10" height="12" viewBox="0 0 12 14"><path d="M3 1 h4.2 a3.3 3.3 0 0 1 0 6.6 h-2.4 v1.6 h4.2 v1.8 h-4.2 v2.8 h-2 v-2.8 h-1.8 v-1.8 h1.8 v-1.6 h-1.8 v-1.8 h1.8z M4.8 2.8 v3 h2.3 a1.5 1.5 0 0 0 0 -3z" fill="#fff" fill-rule="evenodd"/></svg>
<div class="abs" style="left:504px;top:475px;width:113px;height:11px;border:1px solid #2f8580;border-right:none"></div>
<div class="abs" style="left:617px;top:475px;width:59px;height:11px;border:1px solid #2f8580"></div>
<div class="abs os" style="left:505px;top:474px;height:13px;line-height:13px;color:#fff;font-size:9.3px;white-space:nowrap">Чистая прибыль</div>
<div class="abs os" style="left:617px;top:474px;width:58px;height:13px;line-height:13px;color:#fff;font-size:9.3px;text-align:right;white-space:nowrap">770.000 руб.</div>
<!-- IMAGE BEFORE -->
<div class="abs" style="left:243px;top:508px;width:216px;height:134px;overflow:hidden;border:1px solid #3d64b0">
<svg width="216" height="134" viewBox="0 0 216 134" style="position:absolute;left:-1px;top:-1px">
 <defs>
  <linearGradient id="wood" x1="0" y1="0" x2="0" y2="1">
   <stop offset="0" stop-color="#1a1411"/><stop offset="0.2" stop-color="#2a1f17"/><stop offset="0.45" stop-color="#54392a"/><stop offset="0.7" stop-color="#74503a"/><stop offset="1" stop-color="#7a563d"/>
  </linearGradient>
  <linearGradient id="sky" x1="0" y1="0" x2="0" y2="1">
   <stop offset="0" stop-color="#5b4f8c"/><stop offset="0.35" stop-color="#c46aa0"/><stop offset="0.5" stop-color="#e89ab0"/><stop offset="0.55" stop-color="#6b4a55"/><stop offset="1" stop-color="#8a6a80"/>
  </linearGradient>
  <linearGradient id="kb" x1="0" y1="0" x2="0" y2="1"><stop offset="0" stop-color="#8a8a89"/><stop offset="1" stop-color="#b0b0ae"/></linearGradient>
  <linearGradient id="sky2" x1="0" y1="0" x2="0" y2="1"><stop offset="0" stop-color="#4a4e8e"/><stop offset="0.2" stop-color="#7a5ea0"/><stop offset="0.4" stop-color="#c07aa8"/><stop offset="0.46" stop-color="#e8b0c4"/><stop offset="1" stop-color="#e8b0c4"/></linearGradient>
  <linearGradient id="lake" x1="0" y1="0" x2="0" y2="1"><stop offset="0" stop-color="#5a4050"/><stop offset="0.3" stop-color="#7a6072"/><stop offset="1" stop-color="#a08496"/></linearGradient>
  <linearGradient id="earth" x1="0.3" y1="0" x2="0.6" y2="1"><stop offset="0" stop-color="#14161c"/><stop offset="0.38" stop-color="#1a1e28"/><stop offset="0.44" stop-color="#c8d0e0"/><stop offset="0.6" stop-color="#7a90b8"/><stop offset="0.8" stop-color="#a8b8d0"/><stop offset="1" stop-color="#5a70a0"/></linearGradient>
 </defs>
 <rect width="216" height="134" fill="url(#wood)"/>
 <g stroke="#000" stroke-opacity="0.18" stroke-width="1">
  <path d="M0 62 Q60 60 216 64"/><path d="M0 78 Q80 75 216 80"/><path d="M0 90 Q100 88 216 93"/><path d="M0 48 Q90 46 216 50"/>
 </g>
 <!-- laptop lid -->
 <path d="M12 3 L113 3 L113 66 L14 66 Z" fill="#0b0b0c"/>
 <rect x="14.2" y="4.2" width="96.8" height="58.8" fill="url(#sky2)"/>
 <path d="M60 30 L14 8 L14 14Z M60 30 L30 4.2 L40 4.2Z M60 30 L55 4.2 L66 4.2Z M60 30 L86 4.2 L96 4.2Z M60 30 L111 12 L111 20Z" fill="#e68ab4" opacity="0.16"/>
 <ellipse cx="60" cy="29" rx="20" ry="4" fill="#f6d0dc" opacity="0.55"/>
 <rect x="14.2" y="4.2" width="96.8" height="1.8" fill="#e8e8ee"/>
 <path d="M14.2 30.5 L28 27 L42.5 22.9 L52 26 L62 30.5Z" fill="#6a4450"/>
 <path d="M60 30.5 L66 28 L72 29 Z" fill="#7a5a66"/>
 <path d="M66 30.5 L80 24 L95 16 L111 10.4 L111 30.5Z" fill="#5a3430"/>
 <path d="M71 30 L80 24 L95 16 L111 10.4 L111 13.5 L96 19 L82 26Z" fill="#b85a40" opacity="0.9"/>
 <rect x="14.2" y="30.5" width="96.8" height="32.5" fill="url(#lake)"/>
 <path d="M14.2 30.5 L28 34 L42.5 38 L52 35 L62 30.5Z" fill="#4a3038" opacity="0.8"/>
 <path d="M66 30.5 L80 37 L95 45 L111 50 L111 30.5Z" fill="#3a2a2c" opacity="0.85"/>
 <g fill="#2c2024"><ellipse cx="25" cy="46" rx="5.5" ry="2"/><ellipse cx="30" cy="53" rx="6" ry="2.6"/><ellipse cx="46" cy="44" rx="4.5" ry="1.8"/><ellipse cx="56" cy="42.5" rx="3" ry="1.3"/><ellipse cx="63" cy="42" rx="3" ry="1.3"/><ellipse cx="65" cy="49" rx="3.5" ry="1.5"/><ellipse cx="78" cy="51" rx="4.5" ry="2.2"/><ellipse cx="91" cy="53" rx="5" ry="2.4"/><ellipse cx="76" cy="44" rx="3" ry="1.4"/></g>
 <g><rect x="40.5" y="60.4" width="50.5" height="2.4" fill="#c8c8d8"/><rect x="42" y="60.6" width="3" height="2" fill="#3a7ad8"/><rect x="46" y="60.6" width="3" height="2" fill="#d84a3a"/><rect x="54" y="60.6" width="3" height="2" fill="#4aa8e8"/><rect x="62" y="60.6" width="3" height="2" fill="#e8a830"/><rect x="70" y="60.6" width="3" height="2" fill="#58b858"/><rect x="80" y="60.6" width="3" height="2" fill="#5a8ae8"/></g>
 <!-- keyboard base -->
 <path d="M19 65.7 L113 65.7 L117 97 L8 97 Z" fill="url(#kb)"/>
 <path d="M21 68.5 L112 68.5 L113 91 L16 91Z" fill="#101010"/>
 <g stroke="#4a4a4a" stroke-width="0.45" opacity="0.8"><path d="M20.5 72.8 H112.2 M19.5 77.2 H112.4 M18.5 81.6 H112.6 M17.5 86 H112.8"/><path d="M27 68.5 V91 M34 68.5 V91 M41 68.5 V91 M48 68.5 V91 M55 68.5 V91 M62 68.5 V91 M69 68.5 V91 M76 68.5 V91 M83 68.5 V91 M90 68.5 V91 M97 68.5 V91 M104 68.5 V91" stroke-opacity="0.6"/></g>
 <rect x="50" y="93.5" width="30" height="3.5" fill="#b0b0ae"/>
 <!-- ipad -->
 <rect x="119" y="57" width="60" height="50" rx="3" fill="#e8e8e8"/>
 <rect x="123" y="61" width="52" height="46" fill="url(#earth)"/>
 <rect x="136" y="63" width="14" height="3" fill="#667" opacity="0.6"/>
 <!-- iphone -->
 <rect x="181" y="76.5" width="24" height="30" rx="2.5" fill="#dcdcdc"/>
 <rect x="183" y="80" width="20" height="26" fill="#8a8a8a"/>
 <g stroke="#555" stroke-width="0.6"><path d="M184 84 H202 M184 88 H202 M184 92 H202 M184 96 H202"/></g>
 <!-- overlay -->
 <rect x="0" y="96" width="216" height="38" fill="#6f7a7d" fill-opacity="0.93"/>
 <rect x="8" y="97" width="105" height="12" fill="#fff" fill-opacity="0.05"/>
 <rect x="119" y="97" width="60" height="12" fill="#fff" fill-opacity="0.05"/>
 <rect x="0" y="95.5" width="216" height="1" fill="#4c70b0"/>
</svg>
<div class="abs os" style="left:-1px;top:102px;width:216px;text-align:center;color:#eceff0;font-size:14px;letter-spacing:-0.25px;line-height:18px;white-space:nowrap">Фотография «До»</div>
</div>

<!-- IMAGE AFTER -->
<div class="abs" style="left:471px;top:508px;width:217px;height:134px;overflow:hidden;border:1px solid #3d64b0">
<svg width="217" height="134" viewBox="0 0 217 134" style="position:absolute;left:-1px;top:-1px">
 <defs>
  <linearGradient id="dk" x1="0" y1="0" x2="1" y2="0.3">
   <stop offset="0" stop-color="#0d0f10"/><stop offset="0.55" stop-color="#15171a"/><stop offset="1" stop-color="#303336"/>
  </linearGradient>
  <linearGradient id="floor" x1="0" y1="0" x2="0" y2="1"><stop offset="0" stop-color="#000" stop-opacity="0"/><stop offset="1" stop-color="#7a7e80" stop-opacity="0.6"/></linearGradient>
  <linearGradient id="chin" x1="0" y1="0" x2="0" y2="1"><stop offset="0" stop-color="#e6e6e6"/><stop offset="1" stop-color="#b8b8b8"/></linearGradient>
 </defs>
 <rect width="217" height="134" fill="url(#dk)"/>
 <rect y="70" width="217" height="30" fill="url(#floor)"/>
 <!-- imac -->
 <rect x="51" y="7.7" width="114" height="67" rx="2.5" fill="#08090a"/>
 <rect x="56.4" y="12.4" width="104.6" height="59" fill="#cfd1d3"/>
 <rect x="56.4" y="12.4" width="104.6" height="1.6" fill="#e8d8c8"/>
 <rect x="56.4" y="14" width="3" height="53" fill="#e8b070"/>
 <rect x="157" y="14" width="4" height="10" fill="#9a80b8"/>
 <rect x="60" y="16" width="98" height="2.5" fill="#e4e6e8"/>
 <rect x="66" y="19.5" width="7" height="2" fill="#4cb84c"/><rect x="75" y="19.5" width="11" height="2" fill="#4cb84c"/>
 <rect x="60" y="22" width="4" height="45" fill="#c2c8ce"/>
 <rect x="61" y="26" width="3" height="3" fill="#3a8ad8"/>
 <rect x="66" y="29" width="21" height="1.4" fill="#3a8ad8"/><rect x="78" y="29" width="9" height="1.4" fill="#4cb84c"/>
 <rect x="91" y="28.5" width="9" height="2" fill="#5aa0d8"/><rect x="102" y="28.5" width="4" height="2" fill="#5aa0d8"/><rect x="148" y="28.5" width="10" height="2" fill="#5aa0d8"/>
 <g fill="#8a8a8a"><rect x="67" y="33" width="17" height="0.7"/><rect x="67" y="36" width="17" height="0.7"/><rect x="67" y="39" width="17" height="0.7"/><rect x="67" y="46" width="18" height="1"/><rect x="67" y="52" width="18" height="1"/><rect x="67" y="55" width="6" height="1" fill="#555"/></g>
 <rect x="73" y="41" width="2" height="1.5" fill="#f0a030"/><rect x="76" y="41" width="2" height="1.5" fill="#f0a030"/>
 <rect x="88" y="24" width="1" height="43" fill="#9ac"/>
 <rect x="94" y="33" width="10" height="2" fill="#c84848"/>
 <rect x="90" y="63" width="30" height="1" fill="#e8d060"/><rect x="100" y="63" width="12" height="1" fill="#60c8e0"/>
 <rect x="105.3" y="20.4" width="40.2" height="25.5" fill="#fbfbfb"/>
 <rect x="105.3" y="20.4" width="40.2" height="1.6" fill="#3a9ae0"/>
 <rect x="114" y="31" width="4" height="2" fill="#3a8ad8"/>
 <g fill="#999"><rect x="110" y="30" width="3" height="1"/><rect x="128" y="30" width="8" height="1"/><rect x="125" y="34" width="10" height="1"/><rect x="126" y="38" width="9" height="1"/></g>
 <rect x="120" y="42" width="5.5" height="1.5" fill="#d02828"/><rect x="125.5" y="42" width="5.5" height="1.5" fill="#38b048"/>
 <rect x="56.4" y="67" width="104.6" height="4.4" fill="#2a3040"/>
 <g fill="#8ab"><rect x="70" y="68" width="3" height="2.5"/><rect x="90" y="68" width="3" height="2.5" fill="#e84"/><rect x="100" y="68" width="3" height="2.5" fill="#4a8"/><rect x="112" y="68" width="3" height="2.5"/><rect x="130" y="68" width="3" height="2.5" fill="#ccc"/></g>
 <rect x="50.4" y="76" width="117.3" height="13.5" rx="1.5" fill="url(#chin)"/>
 <path d="M107.5 80 c1.5 -0.3 2.2 0.5 2.6 0.4 c0.4 0 1 -0.7 2.2 -0.5 c-1 0.8 -0.9 2.3 0.3 2.9 c-0.4 1.1 -1.1 2 -1.8 2 c-0.5 0 -0.7 -0.3 -1.3 -0.3 c-0.6 0 -0.8 0.3 -1.3 0.3 c-0.9 0 -2.2 -2 -2 -3.5 c0.1 -0.8 0.7 -1.3 1.3 -1.3z M110 79.7 c0 -0.8 0.6 -1.4 1.2 -1.5 c0 0.8 -0.5 1.4 -1.2 1.5z" fill="#111"/>
 <path d="M94 89.5 L122.7 89.5 L123 97 L94 97Z" fill="#b5b5b0"/>
 <!-- overlay -->
 <rect x="0" y="96" width="217" height="38" fill="#2c9f50" fill-opacity="0.97"/>
 <path d="M96 97 L120 97 L124 118 L92 118Z" fill="#fff" fill-opacity="0.04"/>
 <rect x="0" y="95.5" width="217" height="1" fill="#3a8a7a"/>
</svg>
<div class="abs os" style="left:-1px;top:102px;width:217px;text-align:center;color:#eef6ef;font-size:14px;letter-spacing:-0.25px;line-height:18px;white-space:nowrap">Фотография «После»</div>
</div>

<!-- TITLE BAR -->
<div class="abs" style="left:7.8px;top:7.6px;width:9.5px;height:9.5px;border-radius:50%;background:#fc4848;box-shadow:inset 0 0 0 0.5px #d23a36"></div>
<div class="abs" style="left:22.7px;top:7.6px;width:9.5px;height:9.5px;border-radius:50%;background:#fbb52a;box-shadow:inset 0 0 0 0.5px #d89820"></div>
<div class="abs" style="left:37.6px;top:7.6px;width:9.5px;height:9.5px;border-radius:50%;background:#2ac23c;box-shadow:inset 0 0 0 0.5px #1ea030"></div>
<div class="abs" style="left:56.5px;top:3px;font-size:16.5px;line-height:18px;color:#8d9b3e;letter-spacing:-0.3px;-webkit-text-stroke:0.5px #8d9b3e">Mu</div>
<div class="abs" style="left:87px;top:4px;width:48px;height:15px;background:#383838;border:1px solid #242424;border-radius:2px"></div>
<div class="abs" style="left:88px;top:5px;width:35px;height:13px;background:#979797;border-right:1px solid #262626"></div>
<div class="abs" style="left:90px;top:5px;font-size:9px;line-height:13px;color:#1d1d1d">75%</div>
<svg class="abs" style="left:125px;top:9px" width="7" height="5"><path d="M0 0 H7 L3.5 4.5Z" fill="#dcdcdc"/></svg>
<svg class="abs" style="left:142px;top:6px" width="16" height="12" viewBox="0 0 16 12"><path d="M0 5 H3 V3 L6 6 L3 9 V7 H0Z" fill="#d8d8d8"/><path d="M7 1 H12 L15 4 V11 H7Z" fill="#d8d8d8"/><path d="M12 1 V4 H15" fill="#9a9a9a"/></svg>
<svg class="abs" style="left:166px;top:5px" width="16" height="14" viewBox="0 0 16 14"><rect x="0.5" y="0.5" width="15" height="13" fill="#2a2a2a" stroke="#cfcfcf"/><rect x="2" y="4" width="12" height="8" fill="#7a7a7a"/><path d="M2 2 H14" stroke="#cfcfcf" stroke-dasharray="1 1"/></svg>
<svg class="abs" style="left:184px;top:9px" width="7" height="5"><path d="M0 0 H7 L3.5 4.5Z" fill="#dcdcdc"/></svg>
<div class="abs" style="left:197px;top:4px;width:1px;height:15px;background:#2c2c2c;box-shadow:1px 0 0 #474747"></div>
<div class="abs" style="left:772px;top:4px;width:1px;height:15px;background:#2c2c2c;box-shadow:1px 0 0 #474747"></div>
<div class="abs ui" style="left:787px;top:6px;font-size:10.2px;line-height:14px;color:#dcdcdc;letter-spacing:-0.35px">План</div>
<div class="abs ui" style="left:837px;top:6px;font-size:10.2px;line-height:14px;color:#f08c25;letter-spacing:-0.35px">Дизайн</div>
<div class="abs ui" style="left:899px;top:6px;font-size:10.2px;line-height:14px;color:#dcdcdc;letter-spacing:-0.35px">Просмотр</div>
<div class="abs ui" style="left:969px;top:6px;font-size:10.2px;line-height:14px;color:#dcdcdc;letter-spacing:-0.35px">Опубликовать</div>
<svg class="abs" style="left:1043px;top:9px" width="8" height="6"><path d="M0 0 H8 L4 5.5Z" fill="#dcdcdc"/></svg>

<!-- CONTROL BAR -->
<div class="abs" style="left:6px;top:30px;width:1px;height:17px;background:#2e2e2e"></div>
<div class="abs ui" style="left:14px;top:32px;font-size:8.6px;line-height:13px;color:#e8e8e8;letter-spacing:-0.1px">Страница:</div>
<div class="abs ui" style="left:61px;top:32px;font-size:8.6px;line-height:11px;color:#727272;border-bottom:1px solid #4e4e4e;letter-spacing:-0.25px">Нет состояния</div>
<div class="abs" style="left:124px;top:28px;width:1px;height:20px;background:#2c2c2c;box-shadow:1px 0 0 #454545"></div>
<div class="abs ui" style="left:129px;top:32px;font-size:8.3px;line-height:12px;color:#e98b2a;border-bottom:1px solid #b86a20;letter-spacing:-0.25px">Заливка:</div>
<div class="abs" style="left:166px;top:31px;width:15px;height:14px;background:#fff;border:1px solid #111;overflow:hidden"><svg width="13" height="12" style="position:absolute;left:0;top:0"><path d="M0 12 L13 0" stroke="#e02020" stroke-width="1"/></svg></div>
<div class="abs" style="left:181px;top:31px;width:10px;height:14px;background:#2b2b2b;border-radius:0 2px 2px 0"></div>
<svg class="abs" style="left:183px;top:36px" width="7" height="5"><path d="M0 0 H7 L3.5 4.5Z" fill="#dcdcdc"/></svg>
<div class="abs" style="left:196px;top:28px;width:1px;height:20px;background:#2c2c2c;box-shadow:1px 0 0 #454545"></div>
<div class="abs ui" style="left:201px;top:32px;font-size:8.3px;line-height:12px;color:#e98b2a;border-bottom:1px solid #b86a20;letter-spacing:-0.25px">Обводка:</div>
<div class="abs" style="left:242px;top:31px;width:14px;height:14px;background:#fff;border:1px solid #111;overflow:hidden"><svg width="12" height="12" style="position:absolute;left:0;top:0"><path d="M0 12 L12 0" stroke="#e02020" stroke-width="1"/><rect x="4" y="4" width="4" height="4" fill="#111"/></svg></div>
<div class="abs" style="left:256px;top:31px;width:10px;height:14px;background:#2b2b2b;border-radius:0 2px 2px 0"></div>
<svg class="abs" style="left:257px;top:36px" width="7" height="5"><path d="M0 0 H7 L3.5 4.5Z" fill="#dcdcdc"/></svg>
<div class="abs" style="left:271px;top:32px;width:12px;height:13px;background:#2b2b2b;border-radius:2px 0 0 2px"></div>
<svg class="abs" style="left:274px;top:33px" width="6" height="11"><path d="M0 4 L3 1 L6 4Z M0 7 L3 10 L6 7Z" fill="#cfcfcf"/></svg>
<div class="abs" style="left:283px;top:32px;width:27px;height:13px;background:#8c8c8c"></div>
<div class="abs" style="left:285px;top:32px;font-size:9px;line-height:13px;color:#1d1d1d">0</div>
<div class="abs" style="left:314px;top:28px;width:1px;height:20px;background:#2c2c2c;box-shadow:1px 0 0 #454545"></div>
<svg class="abs" style="left:322px;top:30px" width="19" height="17" viewBox="0 0 19 17"><path d="M1 5 V1 H5 M14 1 H18 V5 M18 12 V16 H14 M5 16 H1 V12" stroke="#d0d0d0" stroke-width="1.3" fill="none"/></svg>
<div class="abs" style="left:348px;top:32px;width:12px;height:13px;background:#2b2b2b;border-radius:2px 0 0 2px"></div>
<svg class="abs" style="left:351px;top:33px" width="6" height="11"><path d="M0 4 L3 1 L6 4Z M0 7 L3 10 L6 7Z" fill="#cfcfcf"/></svg>
<div class="abs" style="left:360px;top:32px;width:26px;height:13px;background:#8c8c8c"></div>
<div class="abs" style="left:362px;top:32px;font-size:9px;line-height:13px;color:#1d1d1d">0</div>
<div class="abs" style="left:392px;top:28px;width:1px;height:20px;background:#2c2c2c;box-shadow:1px 0 0 #454545"></div>
<div class="abs ui" style="left:397px;top:32px;font-size:8.3px;line-height:12px;color:#e98b2a;border-bottom:1px solid #b86a20;letter-spacing:-0.25px">Эффекты:</div>
<svg class="abs" style="left:442px;top:34px" width="9" height="9" viewBox="0 0 9 9"><rect width="9" height="9" fill="#e8e8e8"/><g fill="#444"><rect x="1" y="1" width="2" height="2"/><rect x="5" y="1" width="2" height="2"/><rect x="3" y="3" width="2" height="2"/><rect x="1" y="5" width="2" height="2"/><rect x="5" y="5" width="2" height="2"/><rect x="3" y="7" width="2" height="2"/></g></svg>
<div class="abs" style="left:457px;top:32px;width:33px;height:13px;background:#555"></div>
<div class="abs" style="left:459px;top:32px;font-size:9px;line-height:13px;color:#787878">100%</div>
<div class="abs" style="left:490px;top:32px;width:11px;height:13px;background:#4a4a4a"></div>
<svg class="abs" style="left:493px;top:35px" width="5" height="7"><path d="M0 0 L5 3.5 L0 7Z" fill="#7a7a7a"/></svg>
<div class="abs" style="left:507px;top:28px;width:1px;height:20px;background:#2c2c2c;box-shadow:1px 0 0 #454545"></div>
<svg class="abs" style="left:515px;top:32px" width="12" height="13" viewBox="0 0 12 13"><circle cx="6" cy="2" r="1.5" stroke="#d8d8d8" stroke-width="1" fill="none"/><path d="M6 3.5 V11.5 M3.5 5.5 H8.5 M1 8 Q1.5 11.5 6 11.5 Q10.5 11.5 11 8" stroke="#d8d8d8" stroke-width="1.3" fill="none"/></svg>
<div class="abs" style="left:535px;top:28px;width:1px;height:20px;background:#2c2c2c;box-shadow:1px 0 0 #454545"></div>
<div class="abs ui" style="left:541px;top:32px;font-size:8.3px;line-height:12px;color:#e98b2a;border-bottom:1px solid #b86a20;letter-spacing:-0.25px">Заливка в браузере:</div>
<div class="abs" style="left:625px;top:31px;width:14px;height:14px;background:#fff;border:1px solid #111"></div>
<div class="abs" style="left:639px;top:31px;width:10px;height:14px;background:#2b2b2b;border-radius:0 2px 2px 0"></div>
<svg class="abs" style="left:641px;top:36px" width="7" height="5"><path d="M0 0 H7 L3.5 4.5Z" fill="#dcdcdc"/></svg>

<!-- TABS -->
<div class="abs" style="left:597px;top:51px;width:48px;height:14px;background:#3a3a3a"></div>
<svg class="abs" style="left:37.5px;top:55.5px" width="5" height="5"><path d="M0.5 0.5 L4.5 4.5 M4.5 0.5 L0.5 4.5" stroke="#c8c8c8" stroke-width="1.2"/></svg>
<div class="abs ui" style="left:48.5px;top:52px;font-size:8.5px;line-height:12px;color:#b4b4b4;letter-spacing:-0.347px">MUSE ГЕНЕРАТОР. Комплект Adobe Muse для создания Landing Page в 5-7 раз быстрее уже сегодня</div>
<div class="abs" style="left:446px;top:51px;width:1px;height:14px;background:#232323;box-shadow:1px 0 0 #363636"></div>
<svg class="abs" style="left:453.5px;top:55.5px" width="5" height="5"><path d="M0.5 0.5 L4.5 4.5 M4.5 0.5 L0.5 4.5" stroke="#c8c8c8" stroke-width="1.2"/></svg>
<div class="abs ui" style="left:464.5px;top:52px;font-size:8.5px;line-height:12px;color:#b4b4b4;letter-spacing:-0.317px">*Все файлы здесь-3</div>
<div class="abs" style="left:550px;top:51px;width:1px;height:14px;background:#232323;box-shadow:1px 0 0 #363636"></div>
<svg class="abs" style="left:557.5px;top:55.5px" width="5" height="5"><path d="M0.5 0.5 L4.5 4.5 M4.5 0.5 L0.5 4.5" stroke="#c8c8c8" stroke-width="1.2"/></svg>
<div class="abs ui" style="left:568.8px;top:52px;font-size:8.5px;line-height:12px;color:#b4b4b4;letter-spacing:-0.625px">Цены</div>
<div class="abs" style="left:597px;top:51px;width:1px;height:14px;background:#232323;box-shadow:1px 0 0 #363636"></div>
<svg class="abs" style="left:603.5px;top:55.5px" width="5" height="5"><path d="M0.5 0.5 L4.5 4.5 M4.5 0.5 L0.5 4.5" stroke="#c8c8c8" stroke-width="1.2"/></svg>
<div class="abs ui" style="left:614px;top:52px;font-size:8.5px;line-height:12px;color:#ffffff;letter-spacing:-0.420px">Кейсы</div>
<svg class="abs" style="left:653.5px;top:55.5px" width="5" height="5"><path d="M0.5 0.5 L4.5 4.5 M4.5 0.5 L0.5 4.5" stroke="#c8c8c8" stroke-width="1.2"/></svg>
<div class="abs ui" style="left:664px;top:52px;font-size:8.5px;line-height:12px;color:#b4b4b4;letter-spacing:-0.387px">Продукт в срезе</div>
<div class="abs" style="left:734px;top:51px;width:1px;height:14px;background:#232323;box-shadow:1px 0 0 #363636"></div>
<svg class="abs" style="left:739.5px;top:55.5px" width="5" height="5"><path d="M0.5 0.5 L4.5 4.5 M4.5 0.5 L0.5 4.5" stroke="#c8c8c8" stroke-width="1.2"/></svg>
<div class="abs ui" style="left:751.7px;top:52px;font-size:8.5px;line-height:12px;color:#b4b4b4;letter-spacing:-0.500px">Первый экран</div>
<div class="abs" style="left:814px;top:51px;width:1px;height:14px;background:#232323;box-shadow:1px 0 0 #363636"></div>
<svg class="abs" style="left:820.5px;top:55.5px" width="5" height="5"><path d="M0.5 0.5 L4.5 4.5 M4.5 0.5 L0.5 4.5" stroke="#c8c8c8" stroke-width="1.2"/></svg>
<div class="abs ui" style="left:830.8px;top:52px;font-size:8.5px;line-height:12px;color:#b4b4b4;letter-spacing:-0.525px">Схема работы</div>
<div class="abs" style="left:892px;top:51px;width:1px;height:14px;background:#232323;box-shadow:1px 0 0 #363636"></div>
<div class="abs" style="left:895px;top:51px;width:1px;height:14px;background:#232323;box-shadow:1px 0 0 #363636"></div>
<svg class="abs" style="left:911px;top:55px" width="10" height="7" viewBox="0 0 10 7"><path d="M0.5 0.5 L3.5 3.5 L0.5 6.5 M5 0.5 L8 3.5 L5 6.5" stroke="#d8d8d8" stroke-width="1.3" fill="none"/></svg>
<!-- LEFT TOOLBAR -->
<svg class="abs" style="left:5px;top:52.5px" width="7" height="5" viewBox="0 0 7 5"><path d="M0 0 L3 2.5 L0 5Z M3.5 0 L6.5 2.5 L3.5 5Z" fill="#c8c8c8"/></svg>
<div class="abs" style="left:8px;top:62px;width:15px;height:2px;background:#272727;border-radius:1px"></div>
<div class="abs" style="left:5px;top:71px;width:20px;height:17px;background:#2b2b2b;border-radius:1px"></div>
<svg class="abs" style="left:10px;top:72px" width="10" height="15" viewBox="0 0 10 15"><path d="M1 1 L1 12 L3.6 9.6 L5.6 14 L7.4 13.2 L5.4 8.9 L9 8.6 Z" fill="none" stroke="#cfcfcf" stroke-width="1.1" stroke-linejoin="round"/></svg>
<svg class="abs" style="left:6px;top:89px" width="17" height="16" viewBox="0 0 17 16"><path d="M8 2.5 H15.5 V9.5" stroke="#cfcfcf" stroke-width="1" stroke-dasharray="1.5 1" fill="none"/><rect x="13.5" y="0.5" width="3" height="3" fill="#d0d0d0"/><path d="M1.5 9 Q1 7.5 2.5 7.5 L4 9 V4.5 Q4 3.5 5 3.5 Q6 3.5 6 4.5 V3 Q6 2 7 2 Q8 2 8 3 V3.5 Q8 2.5 9 2.5 Q10 2.5 10 3.5 V5 Q10 4 11 4 Q12 4 12 5 V10 Q12 14.5 8 15 H6.5 Q4 15 2.8 12.5Z" fill="#c8c8c8"/><path d="M6 4.5 V8.5 M8 3.5 V8.5 M10 5 V8.5" stroke="#7a7a7a" stroke-width="0.6"/></svg>
<div class="abs" style="left:8px;top:107px;font-family:'Liberation Serif',serif;font-size:15px;line-height:16px;color:#c8c8c8;-webkit-text-stroke:0.3px #c8c8c8">T</div>
<div class="abs" style="left:22px;top:119px;width:3px;height:3px;background:#bbb;transform:rotate(45deg)"></div>
<div class="abs" style="left:8px;top:129px;width:12px;height:10px;border:1px solid #b5b5b5;background:#5a5a5a;box-shadow:inset 0 0 0 1px #444"></div>
<div class="abs" style="left:4px;top:144px;width:24px;height:1px;background:#2d2d2d"></div>
<svg class="abs" style="left:7px;top:147px" width="15" height="15" viewBox="0 0 15 15"><path d="M2 7 L4.5 10 L4.5 3 Q4.5 2 5.5 2 Q6.5 2 6.5 3 L6.5 7 L6.5 1.5 Q6.5 0.5 7.5 0.5 Q8.5 0.5 8.5 1.5 L8.5 7 L8.5 2 Q8.5 1 9.5 1 Q10.5 1 10.5 2 L10.5 7.5 L10.5 3.5 Q10.5 2.5 11.5 2.5 Q12.5 2.5 12.5 3.5 L12.5 9 Q12.5 14.5 8 14.5 Q5 14.5 3.5 12 L0.8 8 Q0.5 6.8 2 7Z" fill="#d0d0d0"/></svg>
<svg class="abs" style="left:8px;top:166px" width="13" height="13" viewBox="0 0 13 13"><circle cx="5" cy="5" r="3.8" fill="#777" stroke="#bdbdbd" stroke-width="1.4"/><path d="M7.8 7.8 L12 12" stroke="#c8c8c8" stroke-width="2.4" stroke-linecap="round"/></svg>

<!-- SCROLL ARROWS -->
<svg class="abs" style="left:915px;top:81px" width="7" height="5"><path d="M0 5 L3.5 0.5 L7 5Z" fill="#e0e0e0"/></svg>
<svg class="abs" style="left:915px;top:705px" width="7" height="5"><path d="M0 0 L3.5 4.5 L7 0Z" fill="#e0e0e0"/></svg>

<!-- RIGHT PANEL -->
<svg class="abs" style="left:1046px;top:52.5px" width="7" height="5" viewBox="0 0 7 5"><path d="M3 0 L0 2.5 L3 5Z M6.5 0 L3.5 2.5 L6.5 5Z" fill="#c8c8c8"/></svg>
<div class="abs" style="left:928px;top:194px;width:127px;height:1px;background:#2a2a2a;box-shadow:0 1px 0 #404040"></div>
<div class="abs" style="left:983px;top:197px;width:15px;height:2px;background:#262626;border-radius:1px"></div>
<div class="abs" style="left:928px;top:307px;width:127px;height:1px;background:#2a2a2a;box-shadow:0 1px 0 #404040"></div>
<div class="abs" style="left:983px;top:310px;width:15px;height:2px;background:#262626;border-radius:1px"></div>
<div class="abs" style="left:928px;top:379px;width:127px;height:1px;background:#2a2a2a;box-shadow:0 1px 0 #404040"></div>
<div class="abs" style="left:983px;top:382px;width:15px;height:2px;background:#262626;border-radius:1px"></div>
<div class="abs" style="left:928px;top:493px;width:127px;height:1px;background:#2a2a2a;box-shadow:0 1px 0 #404040"></div>
<div class="abs" style="left:983px;top:62px;width:15px;height:2px;background:#262626;border-radius:1px"></div>
<svg class="abs" style="left:935.5px;top:71px" width="13.5" height="12.7" viewBox="0 0 16 15"><path d="M1 13 L5.5 1.5 L10 13 M3 9 H8" stroke="#c8c8c8" stroke-width="1.3" fill="none"/><path d="M12.5 0 V15" stroke="#c8c8c8" stroke-width="1"/></svg>
<div class="abs ui" style="left:954px;top:72px;font-size:8.6px;line-height:12px;color:#e6e6e6;letter-spacing:-0.35px">Текст</div>
<svg class="abs" style="left:935.5px;top:92px" width="13.5" height="12.7" viewBox="0 0 16 15"><path d="M7 2 C12 2 15 5 15 8 C15 10 13 10 12 10 C10.5 10 10.5 12 9 12.5 C6 13.5 1 12 1 8 C1 4.5 4 2 7 2Z" fill="#c4c4c4"/><circle cx="4.5" cy="8" r="1.2" fill="#383838"/><circle cx="6" cy="5" r="1.2" fill="#383838"/><circle cx="9.5" cy="4.8" r="1.2" fill="#383838"/><circle cx="7.5" cy="10" r="1.2" fill="#383838"/></svg>
<div class="abs ui" style="left:954px;top:92px;font-size:8.6px;line-height:12px;color:#e6e6e6;letter-spacing:-0.35px">Цвет</div>
<svg class="abs" style="left:935.5px;top:113px" width="13.5" height="12.7" viewBox="0 0 16 15"><rect x="1" y="3" width="14" height="10" fill="#c4c4c4"/><g fill="#383838"><rect x="2.3" y="4.3" width="3" height="3.5"/><rect x="6.5" y="4.3" width="3" height="3.5"/><rect x="10.7" y="4.3" width="3" height="3.5"/><rect x="2.3" y="8.5" width="3" height="3.5"/><rect x="6.5" y="8.5" width="3" height="3.5"/><rect x="10.7" y="8.5" width="3" height="3.5"/></g></svg>
<div class="abs ui" style="left:954px;top:113px;font-size:8.6px;line-height:12px;color:#e6e6e6;letter-spacing:-0.35px">Образцы</div>
<svg class="abs" style="left:935.5px;top:133px" width="13.5" height="12.7" viewBox="0 0 16 15"><rect x="4.5" y="1" width="7" height="6" fill="#9a9a9a" stroke="#c4c4c4"/><rect x="1" y="7.5" width="7" height="6.5" fill="#9a9a9a" stroke="#c4c4c4"/><rect x="8" y="7.5" width="7" height="6.5" fill="#9a9a9a" stroke="#c4c4c4"/></svg>
<div class="abs ui" style="left:954px;top:134px;font-size:8.6px;line-height:12px;color:#e6e6e6;letter-spacing:-0.35px">Библиотека мини-пр...</div>
<svg class="abs" style="left:935.5px;top:154px" width="13.5" height="12.7" viewBox="0 0 16 15"><rect x="3" y="3" width="10" height="10" fill="#8a8a8a" stroke="#c4c4c4"/><rect x="1" y="1" width="3" height="3" fill="#c4c4c4"/><rect x="12" y="1" width="3" height="3" fill="#c4c4c4"/><rect x="1" y="12" width="3" height="3" fill="#c4c4c4"/><rect x="12" y="12" width="3" height="3" fill="#c4c4c4"/></svg>
<div class="abs ui" style="left:954px;top:155px;font-size:8.6px;line-height:12px;color:#e6e6e6;letter-spacing:-0.35px">Состояния</div>
<svg class="abs" style="left:935.5px;top:175px" width="13.5" height="12.7" viewBox="0 0 16 15"><path d="M5 0.5 H11 M8 0.5 V5" stroke="#c4c4c4" stroke-width="1.3"/><rect x="2.5" y="5" width="11" height="8" fill="none" stroke="#c4c4c4"/><rect x="1" y="12" width="3" height="3" fill="#c4c4c4"/><rect x="12" y="12" width="3" height="3" fill="#c4c4c4"/></svg>
<div class="abs ui" style="left:954px;top:175px;font-size:8.6px;line-height:12px;color:#e6e6e6;letter-spacing:-0.35px">Эффекты прокрутки</div>
<svg class="abs" style="left:935.5px;top:205px" width="13.5" height="12.7" viewBox="0 0 16 15"><rect x="1" y="8" width="5" height="5" fill="none" stroke="#c4c4c4"/><rect x="3" y="10" width="5" height="5" fill="#666" stroke="#c4c4c4"/><path d="M11 1 H15 V12 M13 1 V12 M11 1 Q9 1 9 3.5 Q9 6 11 6 H13" stroke="#c4c4c4" stroke-width="1" fill="#c4c4c4"/></svg>
<div class="abs ui" style="left:954px;top:205px;font-size:8.6px;line-height:12px;color:#e6e6e6;letter-spacing:-0.35px">Стили абзацев</div>
<svg class="abs" style="left:935.5px;top:225px" width="13.5" height="12.7" viewBox="0 0 16 15"><rect x="7" y="1" width="8" height="9" fill="#8a8a8a" stroke="#c4c4c4" stroke-dasharray="1.5 1"/><rect x="1" y="8" width="5" height="5" fill="none" stroke="#c4c4c4"/><rect x="3" y="10" width="5" height="5" fill="#666" stroke="#c4c4c4"/></svg>
<div class="abs ui" style="left:954px;top:226px;font-size:8.6px;line-height:12px;color:#e6e6e6;letter-spacing:-0.35px">Стили графики</div>
<svg class="abs" style="left:935.5px;top:247px" width="13.5" height="12.7" viewBox="0 0 16 15"><path d="M8 10 L11.5 1 L15 10 M9.3 7 H13.7" stroke="#c4c4c4" stroke-width="1.2" fill="none"/><rect x="1" y="8" width="5" height="5" fill="none" stroke="#c4c4c4"/><rect x="3" y="10" width="5" height="5" fill="#666" stroke="#c4c4c4"/></svg>
<div class="abs ui" style="left:954px;top:247px;font-size:8.6px;line-height:12px;color:#e6e6e6;letter-spacing:-0.35px">Стили символов</div>
<svg class="abs" style="left:935.5px;top:267px" width="13.5" height="12.7" viewBox="0 0 16 15"><circle cx="5" cy="1.5" r="1" fill="#c4c4c4"/><circle cx="5" cy="5" r="1" fill="#c4c4c4"/><path d="M8 1.5 H15 M8 4.5 H15 M9 7.5 H15" stroke="#c4c4c4" stroke-width="1.3"/><rect x="1" y="8" width="5" height="5" fill="none" stroke="#c4c4c4"/><rect x="3" y="10" width="5" height="5" fill="#666" stroke="#c4c4c4"/></svg>
<div class="abs ui" style="left:954px;top:268px;font-size:8.6px;line-height:12px;color:#e6e6e6;letter-spacing:-0.35px">Стили маркеров</div>
<svg class="abs" style="left:935.5px;top:288px" width="13.5" height="12.7" viewBox="0 0 16 15"><path d="M8 1 L15 5 L8 9 L1 5Z" fill="#c4c4c4"/><path d="M1 8 L8 12 L15 8 M1 10.5 L8 14.5 L15 10.5" stroke="#c4c4c4" stroke-width="1.5" fill="none"/></svg>
<div class="abs ui" style="left:954px;top:289px;font-size:8.6px;line-height:12px;color:#e6e6e6;letter-spacing:-0.35px">Слои</div>
<svg class="abs" style="left:935.5px;top:319px" width="13.5" height="12.7" viewBox="0 0 16 15"><rect x="1" y="2" width="2.5" height="12" fill="#b0b0b0"/><rect x="4.5" y="2" width="2.5" height="12" fill="#c4c4c4"/><path d="M8 3 L10.5 2 L15 13.5 L12.5 14.5Z" fill="#c4c4c4"/></svg>
<div class="abs ui" style="left:954px;top:319px;font-size:8.6px;line-height:12px;color:#e6e6e6;letter-spacing:-0.35px">Библиотека</div>
<svg class="abs" style="left:935.5px;top:339px" width="13.5" height="12.7" viewBox="0 0 16 15"><text x="1" y="13" font-family="Liberation Serif" font-style="italic" font-size="15" fill="#c8c8c8">A</text></svg>
<div class="abs ui" style="left:954px;top:340px;font-size:8.6px;line-height:12px;color:#e6e6e6;letter-spacing:-0.35px">Глифы</div>
<svg class="abs" style="left:935.5px;top:360px" width="13.5" height="12.7" viewBox="0 0 16 15"><circle cx="2.5" cy="4" r="1.6" fill="#c4c4c4"/><circle cx="2.5" cy="11" r="1.6" fill="#c4c4c4"/><rect x="6" y="2.5" width="9" height="3" fill="#a8a8a8"/><rect x="6" y="9.5" width="9" height="3" fill="#a8a8a8"/><rect x="6" y="6" width="9" height="1" fill="#777"/><rect x="6" y="13" width="9" height="1" fill="#777"/></svg>
<div class="abs ui" style="left:954px;top:361px;font-size:8.6px;line-height:12px;color:#e6e6e6;letter-spacing:-0.35px">Маркеры</div>
<svg class="abs" style="left:935.5px;top:391px" width="13.5" height="12.7" viewBox="0 0 16 15"><path d="M1.5 0 V15" stroke="#c4c4c4" stroke-width="1.2"/><rect x="3" y="2" width="6" height="4.5" fill="#b8b8b8"/><rect x="3" y="8" width="12" height="5" fill="#b8b8b8"/></svg>
<div class="abs ui" style="left:954px;top:391px;font-size:8.6px;line-height:12px;color:#e6e6e6;letter-spacing:-0.35px">Выравнивание</div>
<svg class="abs" style="left:935.5px;top:412px" width="13.5" height="12.7" viewBox="0 0 16 15"><rect x="1" y="4" width="14" height="10" fill="#8a8a8a" stroke="#c4c4c4"/><path d="M5.5 4 V1.5 H10.5 V4" stroke="#c4c4c4" fill="none"/><path d="M1 8 H15" stroke="#c4c4c4"/><rect x="7" y="7" width="2" height="2" fill="#e0e0e0"/></svg>
<div class="abs ui" style="left:954px;top:412px;font-size:8.6px;line-height:12px;color:#e6e6e6;letter-spacing:-0.35px">Ресурсы</div>
<svg class="abs" style="left:935.5px;top:432px" width="13.5" height="12.7" viewBox="0 0 16 15"><rect x="0.5" y="1" width="3" height="13" fill="#b0b0b0"/><rect x="12.5" y="1" width="3" height="13" fill="#b0b0b0"/><path d="M5 7.5 H11 M6 6 L4.5 7.5 L6 9 M10 6 L11.5 7.5 L10 9" stroke="#d0d0d0" stroke-width="1" fill="none"/></svg>
<div class="abs ui" style="left:954px;top:433px;font-size:8.6px;line-height:12px;color:#e6e6e6;letter-spacing:-0.35px">Интервалы</div>
<svg class="abs" style="left:935.5px;top:453px" width="13.5" height="12.7" viewBox="0 0 16 15"><rect x="1" y="1" width="9" height="9" fill="#9a9a9a" stroke="#c4c4c4"/><rect x="6" y="6" width="9" height="9" fill="none" stroke="#c4c4c4"/></svg>
<div class="abs ui" style="left:954px;top:454px;font-size:8.6px;line-height:12px;color:#e6e6e6;letter-spacing:-0.35px">Заливка</div>
<svg class="abs" style="left:935.5px;top:474px" width="13.5" height="12.7" viewBox="0 0 16 15"><rect x="2.5" y="2.5" width="11" height="11" fill="none" stroke="#c4c4c4" stroke-dasharray="1.5 1.5"/><rect x="1" y="1" width="3" height="3" fill="#c4c4c4"/><rect x="12" y="1" width="3" height="3" fill="#c4c4c4"/><rect x="1" y="12" width="3" height="3" fill="#c4c4c4"/><rect x="12" y="12" width="3" height="3" fill="#c4c4c4"/><rect x="7" y="7" width="2" height="2" fill="#888"/></svg>
<div class="abs ui" style="left:954px;top:474px;font-size:8.6px;line-height:12px;color:#e6e6e6;letter-spacing:-0.35px">Перспектива</div>

</body></html>
